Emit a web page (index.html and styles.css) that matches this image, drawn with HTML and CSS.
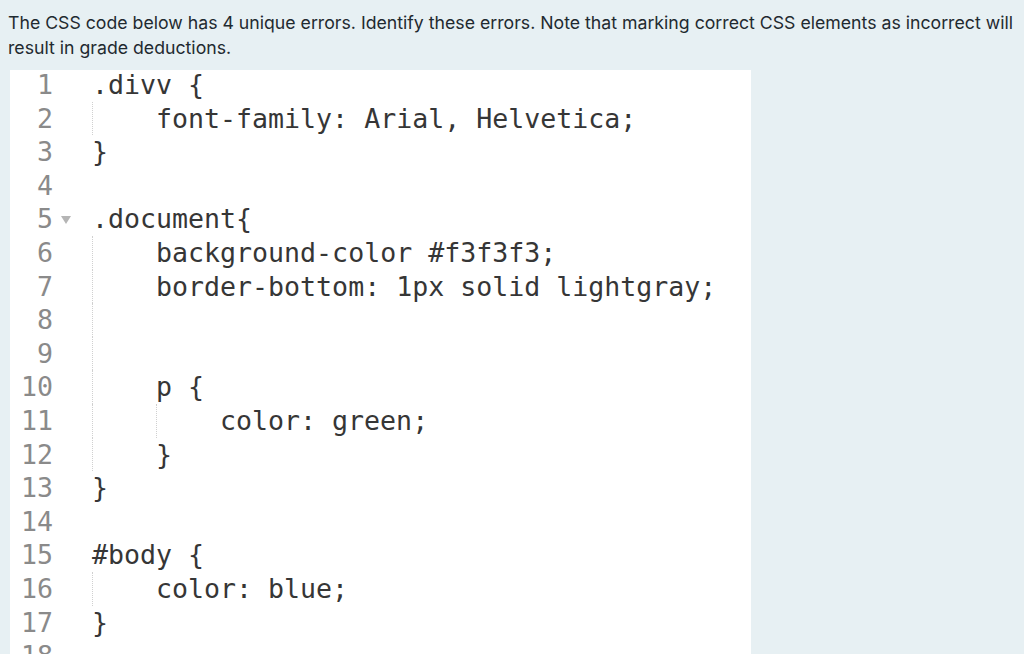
FILE: index.html
```html
<!DOCTYPE html>
<html>
<head>
<meta charset="utf-8">
<link rel="stylesheet" href="styles.css">
</head>
<body>
<div class="page">
  <p class="prompt">The CSS code below has 4 unique errors. Identify these errors. Note that marking correct CSS elements as incorrect will result in grade deductions.</p>
  <div class="editor">
    <div class="line"><span class="num">1</span><span class="fold"></span><span class="code">.divv {</span></div>
    <div class="line"><span class="num">2</span><span class="fold"></span><span class="code"><span class="ind"></span>font-family: Arial, Helvetica;</span></div>
    <div class="line"><span class="num">3</span><span class="fold"></span><span class="code">}</span></div>
    <div class="line"><span class="num">4</span><span class="fold"></span><span class="code"></span></div>
    <div class="line"><span class="num">5</span><span class="fold"><span class="arrow"></span></span><span class="code">.document{</span></div>
    <div class="line"><span class="num">6</span><span class="fold"></span><span class="code"><span class="ind"></span>background-color #f3f3f3;</span></div>
    <div class="line"><span class="num">7</span><span class="fold"></span><span class="code"><span class="ind"></span>border-bottom: 1px solid lightgray;</span></div>
    <div class="line"><span class="num">8</span><span class="fold"></span><span class="code"><span class="ind"></span></span></div>
    <div class="line"><span class="num">9</span><span class="fold"></span><span class="code"><span class="ind"></span></span></div>
    <div class="line"><span class="num">10</span><span class="fold"></span><span class="code"><span class="ind"></span>p {</span></div>
    <div class="line"><span class="num">11</span><span class="fold"></span><span class="code"><span class="ind"></span><span class="ind"></span>color: green;</span></div>
    <div class="line"><span class="num">12</span><span class="fold"></span><span class="code"><span class="ind"></span>}</span></div>
    <div class="line"><span class="num">13</span><span class="fold"></span><span class="code">}</span></div>
    <div class="line"><span class="num">14</span><span class="fold"></span><span class="code"></span></div>
    <div class="line"><span class="num">15</span><span class="fold"></span><span class="code">#body {</span></div>
    <div class="line"><span class="num">16</span><span class="fold"></span><span class="code"><span class="ind"></span>color: blue;</span></div>
    <div class="line"><span class="num">17</span><span class="fold"></span><span class="code">}</span></div>
    <div class="line"><span class="num">18</span><span class="fold"></span><span class="code"></span></div>
  </div>
</div>
</body>
</html>
```
FILE: styles.css
```css
html, body {
  margin: 0;
  padding: 0;
  background: #e7f0f3;
  overflow: hidden;
}
.page {
  height: 654px;
  overflow: hidden;
}
.prompt {
  margin: 0;
  padding: 10px 4px 0 8px;
  font-family: Inter, "Noto Sans", sans-serif;
  font-size: 17.7px;
  line-height: 25px;
  color: #1f2a30;
}
.editor {
  margin: 10px 0 0 10px;
  width: 741px;
  background: #ffffff;
  font-family: "DejaVu Sans Mono", monospace;
  font-size: 26.6px;
  color: #363636;
}
.line {
  display: flex;
  height: 33.6px;
  line-height: 33.6px;
}
.line:first-child {
  height: 31.6px;
  line-height: 29.6px;
}
.num {
  width: 43px;
  text-align: right;
  color: #8a8a8a;
  flex: none;
}
.fold {
  width: 39px;
  flex: none;
  display: flex;
  align-items: center;
  justify-content: flex-start;
  padding-left: 8px;
  box-sizing: border-box;
}
.arrow {
  width: 0;
  height: 0;
  border-left: 5px solid transparent;
  border-right: 5px solid transparent;
  border-top: 8px solid #b5b5b5;
  margin-top: 2px;
}
.code {
  white-space: pre;
  display: flex;
  align-items: stretch;
}
.ind {
  display: inline-block;
  width: 64px;
  flex: none;
  box-sizing: border-box;
  border-left: 1px dotted #d0d0d0;
}
```
